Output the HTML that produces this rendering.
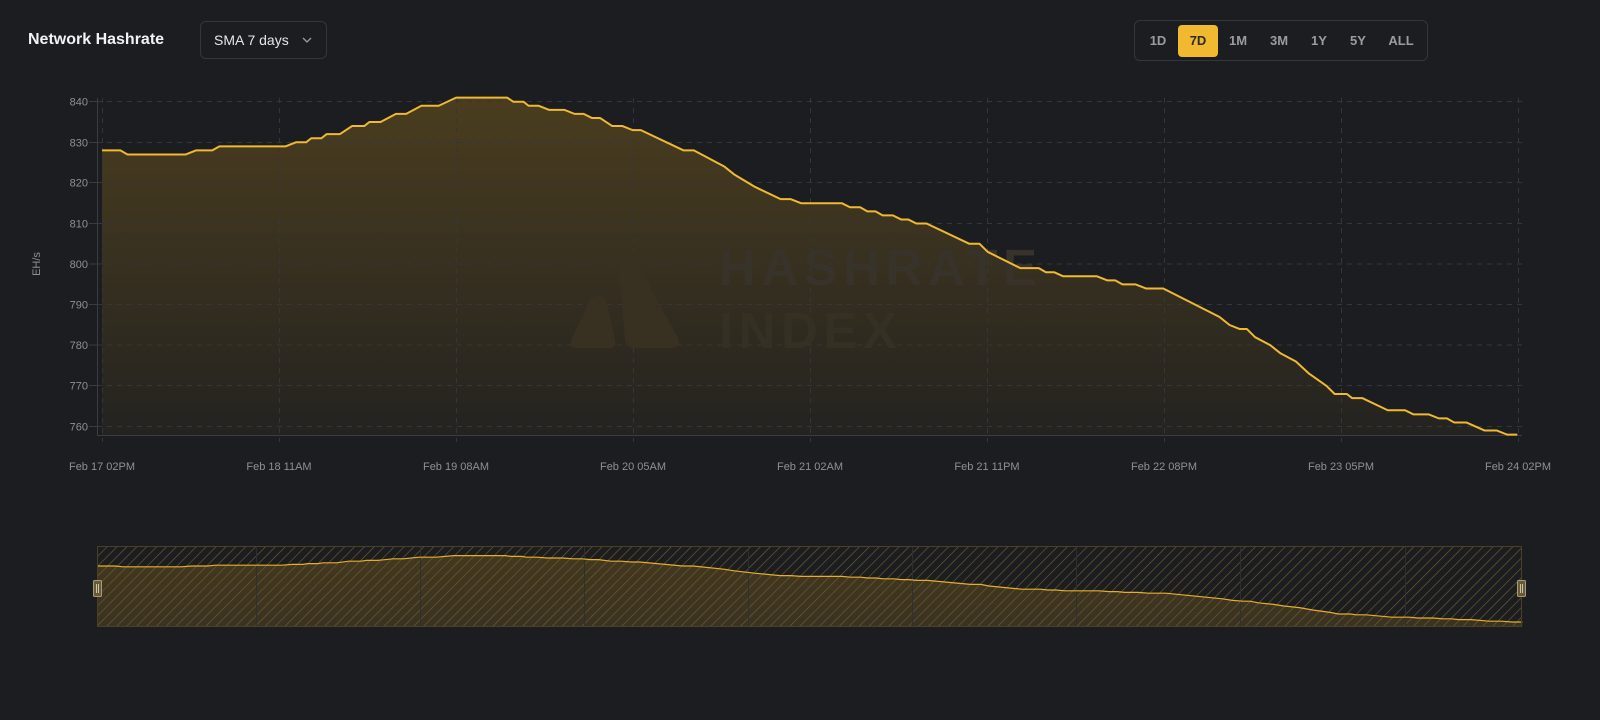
<!DOCTYPE html>
<html><head><meta charset="utf-8"><style>
html,body{margin:0;padding:0;background:#1c1d20;width:1600px;height:720px;overflow:hidden;font-family:"Liberation Sans",sans-serif}
.t{position:absolute;left:28px;top:31px;color:#f2f2f2;font-weight:bold;font-size:16px}
.dd{position:absolute;left:200px;top:21px;width:127px;height:38px;box-sizing:border-box;border:1px solid #34363a;border-radius:6px;color:#e6e6e6;font-size:14px;line-height:37px;padding-left:13px}
.dd svg{position:absolute;right:14px;top:15px}
.grp{position:absolute;left:1134px;top:20px;width:294px;height:41px;box-sizing:border-box;border:1px solid #34363a;border-radius:6px}
.b{position:absolute;top:4px;height:32px;line-height:32px;font-size:13px;font-weight:bold;color:#9a9ca2;text-align:center;transform:translateX(-50%)}
.b.a{background:#f0b92f;color:#2a2a2a;width:40px;border-radius:4px}
</style></head><body>
<div class="t">Network Hashrate</div>
<div class="dd">SMA 7 days<svg width="10" height="7" viewBox="0 0 10 7"><path d="M1 1l4 4 4-4" fill="none" stroke="#9a9ca2" stroke-width="1.3"/></svg></div>
<div class="grp">
<div class="b" style="left:23px">1D</div>
<div class="b a" style="left:63px">7D</div>
<div class="b" style="left:103px">1M</div>
<div class="b" style="left:144px">3M</div>
<div class="b" style="left:184px">1Y</div>
<div class="b" style="left:223px">5Y</div>
<div class="b" style="left:266px">ALL</div>
</div>
<svg width="1600" height="720" style="position:absolute;left:0;top:0" xmlns="http://www.w3.org/2000/svg">
<defs>
<linearGradient id="g" x1="0" y1="1" x2="0" y2="0"><stop offset="0" stop-color="#4a3d1f"/><stop offset="1" stop-color="#242320"/></linearGradient>
<linearGradient id="g2" x1="0" y1="1" x2="0" y2="0"><stop offset="0" stop-color="#43381f"/><stop offset="1" stop-color="#3a3222"/></linearGradient>
<pattern id="h" width="7" height="7" patternUnits="userSpaceOnUse" patternTransform="rotate(45)"><line x1="0" y1="0" x2="0" y2="7" stroke="#6e5d2c" stroke-width="1.3"/></pattern>
</defs>
<g transform="matrix(1.0204,0,0,-4.06,0,3512.1)">
<path d="M100 757.9L100 828L118 828L125 827L182 827L192 828L208 828L215 829L280 829L290 830L300 830L305 831L315 831L320 832L333 832L345 834L357 834L362 835L373 835L388 837L398 837L413 839L430 839L447 841L497 841L503 840L513 840L518 839L528 839L538 838L553 838L563 837L572 837L580 836L588 836L600 834L610 834L620 833L628 833L670 828L680 828L710 824L720 822L740 819L765 816L775 816L785 815L825 815L833 814L843 814L850 813L858 813L865 812L875 812L883 811L890 811L898 810L908 810L950 805L960 805L968 803L1000 799L1018 799L1025 798L1033 798L1042 797L1075 797L1085 796L1093 796L1100 795L1113 795L1123 794L1140 794L1195 787L1205 785L1215 784L1222 784L1230 782L1245 780L1255 778L1270 776L1283 773L1300 770L1308 768L1320 768L1325 767L1335 767L1360 764L1377 764L1385 763L1400 763L1410 762L1418 762L1425 761L1437 761L1455 759L1467 759L1477 758L1487 758L1487 757.9Z" fill="url(#g)"/>
</g>
<g stroke="#34363a" stroke-width="1" stroke-dasharray="5,5">
<line x1="97" y1="101.5" x2="1522" y2="101.5"/><line x1="97" y1="142.5" x2="1522" y2="142.5"/><line x1="97" y1="182.5" x2="1522" y2="182.5"/><line x1="97" y1="223.5" x2="1522" y2="223.5"/><line x1="97" y1="264" x2="1522" y2="264"/><line x1="97" y1="304.5" x2="1522" y2="304.5"/><line x1="97" y1="345" x2="1522" y2="345"/><line x1="97" y1="385.5" x2="1522" y2="385.5"/><line x1="97" y1="426.5" x2="1522" y2="426.5"/>
<line x1="102.5" y1="98" x2="102.5" y2="442"/><line x1="279.5" y1="98" x2="279.5" y2="442"/><line x1="456.5" y1="98" x2="456.5" y2="442"/><line x1="633.5" y1="98" x2="633.5" y2="442"/><line x1="810.5" y1="98" x2="810.5" y2="442"/><line x1="987.5" y1="98" x2="987.5" y2="442"/><line x1="1164.5" y1="98" x2="1164.5" y2="442"/><line x1="1341.5" y1="98" x2="1341.5" y2="442"/><line x1="1518.5" y1="98" x2="1518.5" y2="442"/>
</g>
<g fill="#383122">
<path d="M618 255 Q628 248 634 258 L678 338 Q682 348 670 348 L635 348 Q626 348 625 340 Z"/>
<path d="M590 300 Q600 290 606 300 L615 340 Q617 348 608 348 L578 348 Q568 348 572 338 Z"/>
</g>
<text x="719" y="285" font-family="Liberation Sans" font-weight="bold" font-size="51" letter-spacing="5.5" fill="#37322a">HASHRATE</text>
<text x="719" y="348" font-family="Liberation Sans" font-weight="bold" font-size="51" letter-spacing="5.5" fill="#343024">INDEX</text>
<g stroke="#3a3c40" stroke-width="1">
<line x1="97.5" y1="98" x2="97.5" y2="435"/><line x1="97" y1="435.5" x2="1522" y2="435.5"/>
<line x1="89" y1="101.5" x2="97" y2="101.5"/><line x1="89" y1="142.5" x2="97" y2="142.5"/><line x1="89" y1="182.5" x2="97" y2="182.5"/><line x1="89" y1="223.5" x2="97" y2="223.5"/><line x1="89" y1="264" x2="97" y2="264"/><line x1="89" y1="304.5" x2="97" y2="304.5"/><line x1="89" y1="345" x2="97" y2="345"/><line x1="89" y1="385.5" x2="97" y2="385.5"/><line x1="89" y1="426.5" x2="97" y2="426.5"/>
</g>
<g transform="matrix(1.0204,0,0,-4.06,0,3512.1)"><path d="M100 828L118 828L125 827L182 827L192 828L208 828L215 829L280 829L290 830L300 830L305 831L315 831L320 832L333 832L345 834L357 834L362 835L373 835L388 837L398 837L413 839L430 839L447 841L497 841L503 840L513 840L518 839L528 839L538 838L553 838L563 837L572 837L580 836L588 836L600 834L610 834L620 833L628 833L670 828L680 828L710 824L720 822L740 819L765 816L775 816L785 815L825 815L833 814L843 814L850 813L858 813L865 812L875 812L883 811L890 811L898 810L908 810L950 805L960 805L968 803L1000 799L1018 799L1025 798L1033 798L1042 797L1075 797L1085 796L1093 796L1100 795L1113 795L1123 794L1140 794L1195 787L1205 785L1215 784L1222 784L1230 782L1245 780L1255 778L1270 776L1283 773L1300 770L1308 768L1320 768L1325 767L1335 767L1360 764L1377 764L1385 763L1400 763L1410 762L1418 762L1425 761L1437 761L1455 759L1467 759L1477 758L1487 758" fill="none" stroke="#f0b92f" stroke-width="2" vector-effect="non-scaling-stroke" stroke-linejoin="round"/></g>
<g font-family="Liberation Sans" font-size="11" fill="#8e9095" text-anchor="end">
<text x="88" y="105.5">840</text><text x="88" y="146.5">830</text><text x="88" y="186.5">820</text><text x="88" y="227.5">810</text><text x="88" y="268">800</text><text x="88" y="308.5">790</text><text x="88" y="349">780</text><text x="88" y="389.5">770</text><text x="88" y="430.5">760</text>
</g>
<text transform="translate(40,264) rotate(-90)" font-family="Liberation Sans" font-size="11" fill="#8e9095" text-anchor="middle">EH/s</text>
<g font-family="Liberation Sans" font-size="11" fill="#8e9095" text-anchor="middle">
<text x="102" y="470">Feb 17 02PM</text><text x="279" y="470">Feb 18 11AM</text><text x="456" y="470">Feb 19 08AM</text><text x="633" y="470">Feb 20 05AM</text><text x="810" y="470">Feb 21 02AM</text><text x="987" y="470">Feb 21 11PM</text><text x="1164" y="470">Feb 22 08PM</text><text x="1341" y="470">Feb 23 05PM</text><text x="1518" y="470">Feb 24 02PM</text>
</g>
<g transform="matrix(1.0276,0,0,-0.8,-5.7,1228.4)">
<path d="M100 751.75L100 828L118 828L125 827L182 827L192 828L208 828L215 829L280 829L290 830L300 830L305 831L315 831L320 832L333 832L345 834L357 834L362 835L373 835L388 837L398 837L413 839L430 839L447 841L497 841L503 840L513 840L518 839L528 839L538 838L553 838L563 837L572 837L580 836L588 836L600 834L610 834L620 833L628 833L670 828L680 828L710 824L720 822L740 819L765 816L775 816L785 815L825 815L833 814L843 814L850 813L858 813L865 812L875 812L883 811L890 811L898 810L908 810L950 805L960 805L968 803L1000 799L1018 799L1025 798L1033 798L1042 797L1075 797L1085 796L1093 796L1100 795L1113 795L1123 794L1140 794L1195 787L1205 785L1215 784L1222 784L1230 782L1245 780L1255 778L1270 776L1283 773L1300 770L1308 768L1320 768L1325 767L1335 767L1360 764L1377 764L1385 763L1400 763L1410 762L1418 762L1425 761L1437 761L1455 759L1467 759L1477 758L1487 758L1487 751.75Z" fill="url(#g2)"/>
</g>
<rect x="97" y="546" width="1425" height="81" fill="url(#h)"/>
<g stroke="#2e2f33"><line x1="256.5" y1="547" x2="256.5" y2="627"/><line x1="420.5" y1="547" x2="420.5" y2="627"/><line x1="584.5" y1="547" x2="584.5" y2="627"/><line x1="748.5" y1="547" x2="748.5" y2="627"/><line x1="912.5" y1="547" x2="912.5" y2="627"/><line x1="1076.5" y1="547" x2="1076.5" y2="627"/><line x1="1240.5" y1="547" x2="1240.5" y2="627"/><line x1="1405.5" y1="547" x2="1405.5" y2="627"/></g>
<g transform="matrix(1.0276,0,0,-0.8,-5.7,1228.4)"><path d="M100 828L118 828L125 827L182 827L192 828L208 828L215 829L280 829L290 830L300 830L305 831L315 831L320 832L333 832L345 834L357 834L362 835L373 835L388 837L398 837L413 839L430 839L447 841L497 841L503 840L513 840L518 839L528 839L538 838L553 838L563 837L572 837L580 836L588 836L600 834L610 834L620 833L628 833L670 828L680 828L710 824L720 822L740 819L765 816L775 816L785 815L825 815L833 814L843 814L850 813L858 813L865 812L875 812L883 811L890 811L898 810L908 810L950 805L960 805L968 803L1000 799L1018 799L1025 798L1033 798L1042 797L1075 797L1085 796L1093 796L1100 795L1113 795L1123 794L1140 794L1195 787L1205 785L1215 784L1222 784L1230 782L1245 780L1255 778L1270 776L1283 773L1300 770L1308 768L1320 768L1325 767L1335 767L1360 764L1377 764L1385 763L1400 763L1410 762L1418 762L1425 761L1437 761L1455 759L1467 759L1477 758L1487 758" fill="none" stroke="#e6ae2a" stroke-width="1.2" vector-effect="non-scaling-stroke"/></g>
<rect x="97.5" y="546.5" width="1424" height="80" fill="none" stroke="#4b4025"/>
<g>
<rect x="93.5" y="580.5" width="8" height="16" rx="1" fill="#6b5b2e" stroke="#a09a8a"/>
<line x1="96.5" y1="584" x2="96.5" y2="593" stroke="#c8c2b0"/><line x1="98.5" y1="584" x2="98.5" y2="593" stroke="#c8c2b0"/>
<rect x="1517.5" y="580.5" width="8" height="16" rx="1" fill="#6b5b2e" stroke="#a09a8a"/>
<line x1="1520.5" y1="584" x2="1520.5" y2="593" stroke="#c8c2b0"/><line x1="1522.5" y1="584" x2="1522.5" y2="593" stroke="#c8c2b0"/>
</g>
</svg>
</body></html>
